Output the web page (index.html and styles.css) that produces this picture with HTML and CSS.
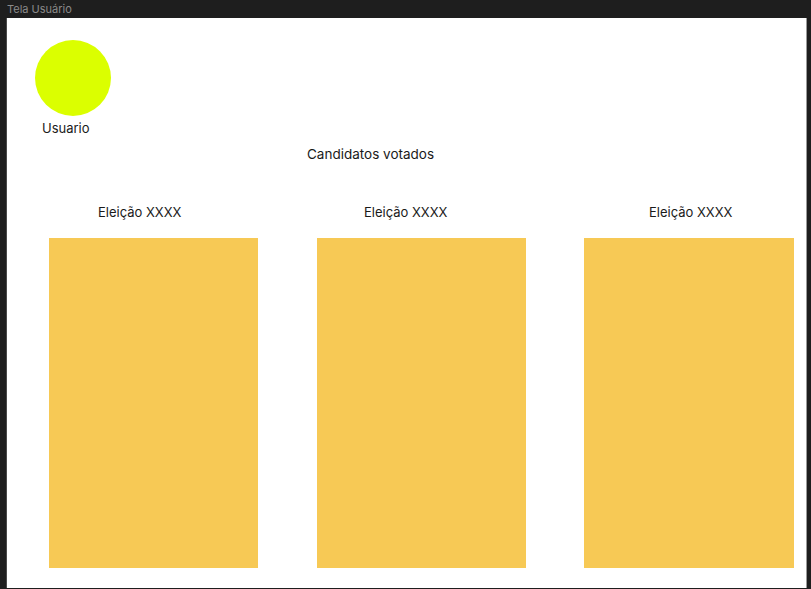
FILE: index.html
```html
<!DOCTYPE html>
<html lang="pt">
<head>
<meta charset="utf-8">
<title>Tela Usuário</title>
<link rel="stylesheet" href="styles.css">
</head>
<body>
<div class="caption">Tela Usuário</div>
<div class="frame">
  <div class="user">
    <div class="avatar"></div>
    <div class="user-name">Usuario</div>
  </div>
  <div class="section-title">Candidatos votados</div>
  <div class="elections">
    <div class="election election-1">
      <div class="election-label">Eleição XXXX</div>
      <div class="election-card"></div>
    </div>
    <div class="election election-2">
      <div class="election-label">Eleição XXXX</div>
      <div class="election-card"></div>
    </div>
    <div class="election election-3">
      <div class="election-label">Eleição XXXX</div>
      <div class="election-card"></div>
    </div>
  </div>
</div>
</body>
</html>
```

FILE: styles.css
```css
* { box-sizing: border-box; }
html, body {
  margin: 0;
  padding: 0;
  background: #1e1e1e;
  font-family: Inter, "Noto Sans", sans-serif;
  overflow: hidden;
}
.caption {
  height: 18px;
  line-height: 19px;
  padding-left: 7px;
  font-size: 11px;
  color: #8a8a8a;
}
.frame {
  margin-left: 6px;
  width: 801px;
  height: 570px;
  background: #ffffff;
  border-left: 1px solid #4a4a4a;
  border-right: 1px solid #9a9a9a;
  color: #1a1a1a;
  font-size: 13px;
  line-height: 17px;
}
.user {
  width: 76px;
  margin-left: 28px;
  padding-top: 22px;
}
.avatar {
  width: 76px;
  height: 76px;
  border-radius: 50%;
  background: #dbff00;
}
.user-name {
  margin-top: 4px;
  margin-left: 7px;
  white-space: nowrap;
}
.section-title {
  margin-top: 9px;
  padding-left: 300px;
  font-size: 13.5px;
}
.elections {
  display: flex;
  margin-top: 41px;
  padding-left: 42px;
}
.election { display: flex; flex-direction: column; }
.election-1 { width: 209px; }
.election-2 { width: 209px; margin-left: 59px; }
.election-3 { width: 210px; margin-left: 58px; }
.election-label { height: 17px; white-space: nowrap; }
.election-1 .election-label { padding-left: 49px; }
.election-2 .election-label { padding-left: 47px; }
.election-3 .election-label { padding-left: 65px; }
.election-card {
  margin-top: 17px;
  height: 330px;
  background: #f7c955;
}
```
